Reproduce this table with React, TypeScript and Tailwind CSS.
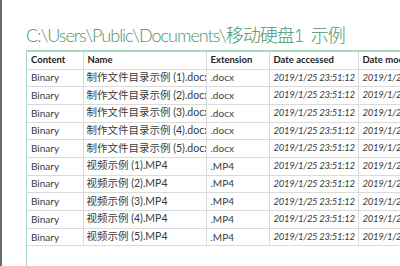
const rows = [
  { name: '制作文件目录示例 (1).docx', ext: '.docx' },
  { name: '制作文件目录示例 (2).docx', ext: '.docx' },
  { name: '制作文件目录示例 (3).docx', ext: '.docx' },
  { name: '制作文件目录示例 (4).docx', ext: '.docx' },
  { name: '制作文件目录示例 (5).docx', ext: '.docx' },
  { name: '视频示例 (1).MP4', ext: '.MP4' },
  { name: '视频示例 (2).MP4', ext: '.MP4' },
  { name: '视频示例 (3).MP4', ext: '.MP4' },
  { name: '视频示例 (4).MP4', ext: '.MP4' },
  { name: '视频示例 (5).MP4', ext: '.MP4' },
]

const date = '2019/1/25 23:51:12'

export default function App() {
  return (
    <div className="flex h-[266px] w-[400px] overflow-hidden bg-white font-['Lato','Noto_Sans_CJK_SC',sans-serif]">
      {/* left edge */}
      <div className="w-[2px] shrink-0 bg-[#6b6b6b]" />

      <div className="flex-1 pl-6 pt-[23px] min-w-0">
        <h1 className="whitespace-nowrap text-[18px] font-light leading-[25px] tracking-[-1px] text-[#4a9468]">
          C:\Users\Public\Documents\移动硬盘1&nbsp;&nbsp;示例
        </h1>

        <div className="mt-[2px] h-[300px] border-l border-[#a8dcc0]">
          <table className="w-[480px] table-fixed border-collapse text-[10px] text-[#3a3a3a]">
            <colgroup>
              <col className="w-[56px]" />
              <col className="w-[123px]" />
              <col className="w-[63px]" />
              <col className="w-[89px]" />
              <col className="w-[149px]" />
            </colgroup>
            <thead>
              <tr className="h-[18px] border-t-2 border-[#a8dcc0] text-left text-[9.5px] text-[#222]">
                <th className="border-b border-r border-[#dadada] px-1 font-bold">Content</th>
                <th className="border-b border-r border-[#dadada] px-1 font-bold">Name</th>
                <th className="border-b border-r border-[#dadada] px-1 font-bold">Extension</th>
                <th className="border-b border-r border-[#dadada] px-1 font-bold">Date accessed</th>
                <th className="border-b border-[#dadada] px-1 font-bold">Date modified</th>
              </tr>
            </thead>
            <tbody>
              {rows.map((r) => (
                <tr key={r.name} className="h-[17.7px]">
                  <td className="whitespace-nowrap border-b border-r border-[#dadada] px-1">Binary</td>
                  <td className="overflow-hidden whitespace-nowrap border-b border-r border-[#dadada] px-[3px] text-[10.5px]">
                    {r.name}
                  </td>
                  <td className="whitespace-nowrap border-b border-r border-[#dadada] px-1">{r.ext}</td>
                  <td className="whitespace-nowrap border-b border-r border-[#dadada] px-1 text-[9.5px] italic tracking-[-0.3px]">{date}</td>
                  <td className="overflow-hidden whitespace-nowrap border-b border-[#dadada] px-1 text-[9.5px] italic tracking-[-0.3px]">{date}</td>
                </tr>
              ))}
            </tbody>
          </table>
        </div>
      </div>
    </div>
  )
}
